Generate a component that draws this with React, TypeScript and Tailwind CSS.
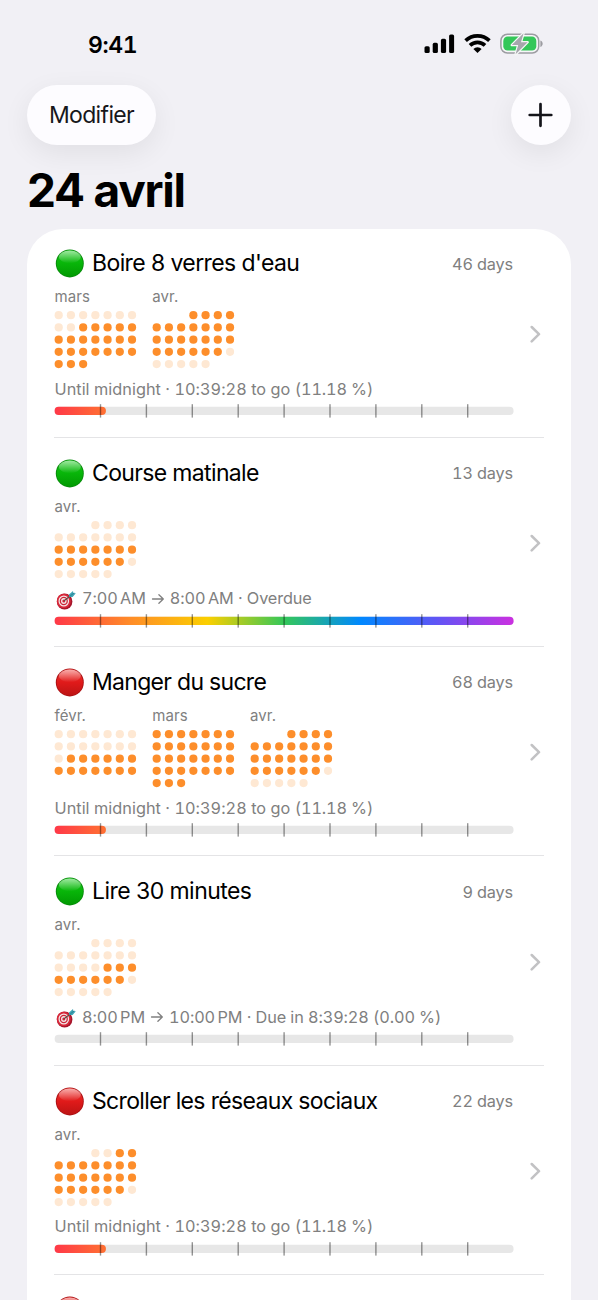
import React from "react";

type Month = { name: string; rows: string[] };
type Habit = {
  title: string;
  titleClass: string;
  good: boolean;
  days: string;
  months: Month[];
  status: React.ReactNode;
  progress: number;
};

// "#" = done, "o" = not done, " " = outside of the month
const habits: Habit[] = [
  {
    title: "Boire 8 verres d'eau",
    titleClass: "tracking-[-0.6px]",
    good: true,
    days: "46 days",
    months: [
      { name: "mars", rows: ["ooooooo", "oo#####", "#######", "#######", "###"] },
      { name: "avr.", rows: ["   ####", "#######", "#######", "######o", "ooooo"] },
    ],
    status: <Midnight />,
    progress: 0.1118,
  },
  {
    title: "Course matinale",
    titleClass: "tracking-[-0.65px]",
    good: true,
    days: "13 days",
    months: [{ name: "avr.", rows: ["   oooo", "ooooooo", "#######", "######o", "ooooo"] }],
    status: <Scheduled from="7:00" fromHalf="AM" to="8:00" toHalf="AM" note="Overdue" />,
    progress: 1,
  },
  {
    title: "Manger du sucre",
    titleClass: "tracking-[-0.7px]",
    good: false,
    days: "68 days",
    months: [
      { name: "févr.", rows: ["ooooooo", "ooooooo", "o######", "#######"] },
      { name: "mars", rows: ["#######", "#######", "#######", "#######", "###"] },
      { name: "avr.", rows: ["   ####", "#######", "#######", "######o", "ooooo"] },
    ],
    status: <Midnight />,
    progress: 0.1118,
  },
  {
    title: "Lire 30 minutes",
    titleClass: "tracking-[-0.55px]",
    good: true,
    days: "9 days",
    months: [{ name: "avr.", rows: ["   oooo", "ooooooo", "oooo###", "######o", "ooooo"] }],
    status: <Scheduled from="8:00" fromHalf="PM" to="10:00" toHalf="PM" note="Due in 8:39:28 (0.00 %)" />,
    progress: 0,
  },
  {
    title: "Scroller les réseaux sociaux",
    titleClass: "tracking-[-0.66px]",
    good: false,
    days: "22 days",
    months: [{ name: "avr.", rows: ["   oo##", "#######", "#######", "######o", "ooooo"] }],
    status: <Midnight />,
    progress: 0.1118,
  },
];

function Midnight() {
  return (
    <span className="tabular-nums tracking-[0.03px]">
      Until midnight · 10:39:28 to go <span className="tracking-[-0.15px]">(11.18 %)</span>
    </span>
  );
}

function Target() {
  return (
    <svg width="21" height="21" viewBox="-0.6 0 21 21" className="mr-[6.5px] mt-[3px] shrink-0">
      <ellipse cx="9" cy="11.5" rx="7.8" ry="8" fill="#a5152b" />
      <ellipse cx="8.2" cy="11" rx="7" ry="7.3" fill="#d8283a" />
      <ellipse cx="8.2" cy="11" rx="5.3" ry="5.6" fill="#f3e9e9" />
      <ellipse cx="8.2" cy="11" rx="4.1" ry="4.3" fill="#cf2639" />
      <ellipse cx="8.2" cy="11" rx="2.8" ry="3" fill="#f3e9e9" />
      <circle cx="8.2" cy="11" r="1.5" fill="#cf2639" />
      <path d="M8.5 10.8L15.5 5.2" stroke="#5b4a42" strokeWidth="1.1" />
      <path d="M13.4 4.4L17.4 1L17.7 3.1L20.2 3.2L17 7L13.6 6.9Z" fill="#3fa5b5" />
      <path d="M14.6 6L18.6 2.8" stroke="#226f83" strokeWidth=".7" />
    </svg>
  );
}

function Scheduled(p: { from: string; fromHalf: string; to: string; toHalf: string; note: string }) {
  return (
    <>
      <Target />
      <span className="flex items-center tabular-nums tracking-[-0.11px]">
        <span>{p.from}</span>
        <span className="ml-[2.5px]">{p.fromHalf}</span>
        <svg width="14" height="12" viewBox="0 0 14 12" className="mx-[5px]" fill="none" stroke="#808080" strokeWidth="1.3" strokeLinecap="round" strokeLinejoin="round">
          <path d="M1.5 6H12.3M7.9 1.7L12.3 6L7.9 10.3" />
        </svg>
        <span>{p.to}</span>
        <span className="ml-[2.5px]">{p.toHalf}</span>
        <span className="whitespace-pre"> · {p.note}</span>
      </span>
    </>
  );
}

function Ball({ good }: { good: boolean }) {
  const id = good ? "ball-good" : "ball-bad";
  return (
    <svg width="30" height="29" viewBox="0 0 30 29" className="shrink-0">
      <defs>
        <linearGradient id={id} x1="0" y1="0" x2="0" y2="1">
          <stop offset="0" stopColor={good ? "#18c71b" : "#ee3a35"} />
          <stop offset=".5" stopColor={good ? "#08b509" : "#e01a1a"} />
          <stop offset="1" stopColor={good ? "#019a02" : "#bd1414"} />
        </linearGradient>
        <linearGradient id={id + "-shine"} x1="0" y1="0" x2="0" y2="1">
          <stop offset="0" stopColor="#fff" stopOpacity=".58" />
          <stop offset="1" stopColor="#fff" stopOpacity="0" />
        </linearGradient>
      </defs>
      <circle cx="15.8" cy="14.4" r="14" fill={good ? "#078a0b" : "#a90f12"} />
      <circle cx="15.8" cy="14.4" r="13.1" fill={`url(#${id})`} />
      <ellipse cx="15.8" cy="7.9" rx="11" ry="6.3" fill={`url(#${id}-shine)`} />
    </svg>
  );
}

function Calendar({ month }: { month: Month }) {
  return (
    <div className="flex w-[97.75px] flex-col">
      <span className="ml-[0.5px] h-[19px] text-[15px] leading-[19px] tracking-[0.1px] text-[#808080]">{month.name}</span>
      <svg width="84" height="59" viewBox="0 0 84 59" className="mt-[4px]">
        {month.rows.map((row, y) =>
          row.split("").map((c, x) =>
            c === " " ? null : (
              <circle key={`${x}-${y}`} cx={4.7 + x * 12.22} cy={5.2 + y * 12.22} r="4.1" fill={c === "#" ? "#fd8e2b" : "#fee8d3"} />
            ),
          ),
        )}
      </svg>
    </div>
  );
}

function Progress({ value, id }: { value: number; id: string }) {
  return (
    <svg width="460" height="14" viewBox="-0.6 0 460 14" className="mt-[4px]">
      <defs>
        <linearGradient id={id} gradientUnits="userSpaceOnUse" x1="0" y1="0" x2="459" y2="0">
          <stop offset="0" stopColor="#ff3848" />
          <stop offset=".1667" stopColor="#ff8d28" />
          <stop offset=".3333" stopColor="#fbcf00" />
          <stop offset=".5" stopColor="#34c759" />
          <stop offset=".6667" stopColor="#0088ff" />
          <stop offset=".8333" stopColor="#6155f5" />
          <stop offset="1" stopColor="#cb30e0" />
        </linearGradient>
      </defs>
      <rect x="0" y="2.8" width="459" height="8.2" rx="4.1" fill="#e7e7e7" />
      {value > 0 && <rect x="0" y="2.8" width={459 * value} height="8.2" rx="4.1" fill={`url(#${id})`} />}
      {[1, 2, 3, 4, 5, 6, 7, 8, 9].map((i) => (
        <rect key={i} x={i * 45.9 - 0.7} y="0.2" width="1.4" height="13.4" fill="#000" fillOpacity=".42" />
      ))}
    </svg>
  );
}

function Row({ habit, index }: { habit: Habit; index: number }) {
  return (
    <section className={`${index === 0 ? "h-[208.5px]" : "h-[209.35px]"} flex shrink-0 flex-col justify-end pl-[27px] pr-[27px]`}>
      <div className="flex h-[188.35px] items-start justify-between border-b border-[#e4e4e6]">
        <div className="flex w-[460px] flex-col">
          <header className="flex h-[29px] items-center">
            <Ball good={habit.good} />
            <h2 className={`ml-[8px] flex-1 whitespace-nowrap text-[23px] font-[370] leading-[29px] ${habit.titleClass}`}>{habit.title}</h2>
            <span className="mr-[1px] text-[16.3px] leading-[22px] tabular-nums tracking-[-0.17px] text-[#808080]">{habit.days}</span>
          </header>
          <div className="mt-[9px] flex h-[82px]">
            {habit.months.map((m) => (
              <Calendar key={m.name} month={m} />
            ))}
          </div>
          <div className="mt-[9px] flex h-[22px] items-center whitespace-nowrap pl-[0.5px] text-[16.3px] text-[#808080]">{habit.status}</div>
          <Progress value={habit.progress} id={`rainbow-${index}`} />
        </div>
        <svg width="14" height="20" viewBox="0 0 14 20" className="mt-[74.5px]" fill="none" stroke="#c2c2c4" strokeWidth="2.5" strokeLinecap="round" strokeLinejoin="round">
          <path d="M1.7 3L9 10.2L1.7 17.4" />
        </svg>
      </div>
    </section>
  );
}

function StatusBar() {
  return (
    <div className="flex h-[85px] shrink-0 items-start justify-between pl-[88px] pr-[55px] pt-[31px]">
      <span className="text-[23px] font-semibold tabular-nums leading-[28px] tracking-[-0.4px]">9:41</span>
      <div className="flex items-center pt-[1px]">
        <svg width="31" height="24" viewBox="0 0 31 24">
          <rect x="0.5" y="14.2" width="5.2" height="6.8" rx="1.6" />
          <rect x="8.7" y="10.8" width="5.2" height="10.2" rx="1.6" />
          <rect x="16.9" y="6.8" width="5.2" height="14.2" rx="1.6" />
          <rect x="25.1" y="2.4" width="5" height="18.6" rx="1.6" />
        </svg>
        <svg width="27" height="24" viewBox="0 0 27 24" className="ml-[9px]" fill="none" stroke="#000" strokeWidth="3.7">
          <path d="M1.6 8.7A17.2 17.2 0 0 1 25.4 8.7" />
          <path d="M6 13.4A10.7 10.7 0 0 1 21 13.4" />
          <path d="M13.5 21.1L9.4 17A5.8 5.8 0 0 1 17.6 17Z" fill="#000" stroke="none" />
        </svg>
        <svg width="43" height="24" viewBox="0 0 43 24" className="ml-[9px]">
          <rect x="0.9" y="2.2" width="37.8" height="18.8" rx="6.5" fill="#f6f6f8" stroke="#9c9ca1" strokeWidth="1.5" />
          <rect x="3.3" y="4.6" width="33" height="14" rx="4.3" fill="#34c759" />
          <path d="M40.4 8.5C43.4 9.7 43.4 13.7 40.4 14.9Z" fill="#9c9ca1" />
          <path d="M23.6 1.2L11.8 13.1H18.2L15.6 22.3L27.6 10.2H21Z" fill="#a6a6ac" stroke="#f5f7f6" strokeWidth="2.4" strokeLinejoin="round" paintOrder="stroke" />
        </svg>
      </div>
    </div>
  );
}

export default function App() {
  return (
    <main className="flex h-[1300px] w-[598px] flex-col overflow-hidden bg-[#f1f0f5] font-['Inter',sans-serif] text-black">
      <StatusBar />
      <nav className="flex h-[59.5px] shrink-0 items-center justify-between px-[27px]">
        <button className="h-[60px] w-[129px] rounded-full bg-[#fdfcff] text-[23px] font-[370] tracking-[-0.65px] text-[#17171c] shadow-[0_8px_28px_rgba(0,0,0,0.07)]">Modifier</button>
        <button className="flex size-[60px] items-center justify-center rounded-full bg-[#fdfcff] shadow-[0_8px_28px_rgba(0,0,0,0.07)]">
          <svg width="26" height="26" viewBox="0.5 0 26 26" stroke="#14141a" strokeWidth="2.7" strokeLinecap="round">
            <path d="M13 2.2V23.8M2.2 13H23.8" />
          </svg>
        </button>
      </nav>
      <h1 className="mt-[17px] h-[56px] shrink-0 pl-[27px] text-[46px] font-bold leading-[56px] tracking-[-1.25px]">24 avril</h1>
      <div className="mx-[27px] mt-[11.5px] flex h-[1200px] shrink-0 flex-col rounded-t-[36px] bg-white">
        {habits.map((h, i) => (
          <Row key={h.title} habit={h} index={i} />
        ))}
        <div className="pl-[27px] pt-[21px]">
          <Ball good={false} />
        </div>
      </div>
    </main>
  );
}
